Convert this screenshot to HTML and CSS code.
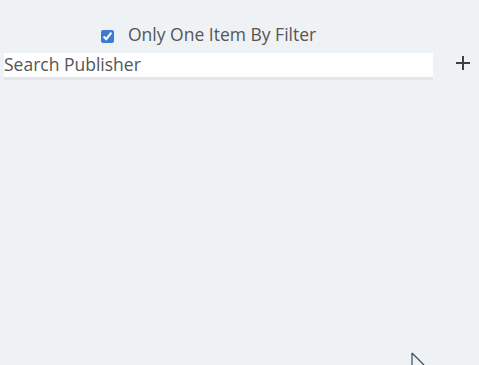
FILE: index.html
```html
<!DOCTYPE html>
<html lang="en">
<head>
    <meta charset="UTF-8">
    <title>Publisher Filter</title>
    <link rel="stylesheet" href="styles.css">
</head>
<body>
    <div class="filter-panel">
        <label class="only-one">
            <input type="checkbox" checked>
            <span>Only One Item By Filter</span>
        </label>
        <div class="search-row">
            <div class="search-box">Search Publisher</div>
            <button class="add-btn" aria-label="Add">
                <svg width="14" height="14" viewBox="0 0 14 14">
                    <path d="M7 0v14M0 7h14" stroke="#3d4146" stroke-width="2" fill="none"/>
                </svg>
            </button>
        </div>
    </div>
    <svg class="cursor" width="14" height="14" viewBox="0 0 14 14">
        <path d="M1 1v13M1 1l12 12" stroke="#34495e" stroke-width="1.2" fill="none"/>
    </svg>
</body>
</html>
```

FILE: styles.css
```css
body {
    margin: 0;
    width: 479px;
    height: 365px;
    background-color: #eff2f5;
    font-family: "Open Sans", Arial, sans-serif;
    color: #555;
    position: relative;
    overflow: hidden;
}
.filter-panel {
    padding: 22px 4px 0 4px;
}
.only-one {
    display: flex;
    align-items: center;
    margin-left: 97px;
    font-size: 17.5px;
    height: 24px;
}
.only-one input {
    width: 13px;
    height: 13px;
    margin: 4px 14px 0 0;
    accent-color: #3a7bd5;
}
.search-row {
    display: flex;
    align-items: center;
    margin-top: 7px;
}
.search-box {
    width: 429px;
    height: 27px;
    line-height: 22px;
    background: #fff;
    border-bottom: 3px solid #e4e6e9;
    font-size: 17.5px;
    color: #555;
    box-sizing: border-box;
}
.add-btn {
    background: none;
    border: none;
    padding: 0;
    margin-left: 23px;
    margin-top: -7px;
    display: flex;
}
.cursor {
    position: absolute;
    left: 411px;
    top: 352px;
}
```
